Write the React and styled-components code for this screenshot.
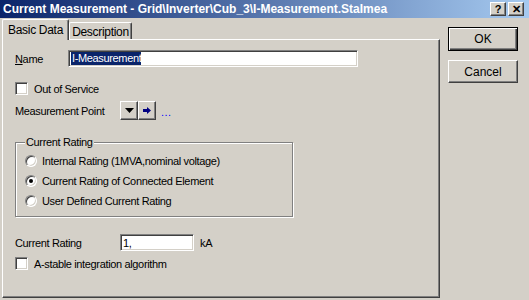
import React from 'react';
import styled, { createGlobalStyle, css } from 'styled-components';

const GlobalStyle = createGlobalStyle`
  html, body {
    margin: 0;
    padding: 0;
    background: #D4D0C8;
  }
  body {
    font-family: 'Liberation Sans', Arial, sans-serif;
    font-size: 11px;
    letter-spacing: -0.35px;
    color: #000;
  }
`;

const raised = css`
  border: 1px solid;
  border-color: #fff #404040 #404040 #fff;
  box-shadow: inset -1px -1px 0 #808080;
`;

const sunken = css`
  border: 1px solid;
  border-color: #808080 #fff #fff #808080;
  box-shadow: inset 1px 1px 0 #404040, inset -1px -1px 0 #D4D0C8;
`;

const Window = styled.div`
  width: 529px;
  height: 300px;
  display: flex;
  flex-direction: column;
  background: #D4D0C8;
  overflow: hidden;
`;

const TitleBar = styled.div`
  height: 18px;
  display: flex;
  align-items: center;
  justify-content: space-between;
  padding: 0 5px 0 3px;
  background: linear-gradient(to right, #0A246A, #A6CAF0);
`;

const Title = styled.div`
  color: #fff;
  font-weight: bold;
  font-size: 12px;
  letter-spacing: 0;
  white-space: nowrap;
`;

const CaptionButtons = styled.div`
  display: flex;
  gap: 2px;
`;

const CaptionButton = styled.div`
  width: 14px;
  height: 12px;
  background: #D4D0C8;
  ${raised};
  display: flex;
  align-items: center;
  justify-content: center;
  font-weight: bold;
  font-size: 11px;
  letter-spacing: 0;
  line-height: 1;
`;

const Body = styled.div`
  flex: 1;
  display: flex;
  padding: 1px 11px 2px 2px;
  gap: 8px;
`;

const Main = styled.div`
  width: 438px;
  display: flex;
  flex-direction: column;
`;

const TabStrip = styled.div`
  height: 20px;
  display: flex;
  align-items: flex-end;
  position: relative;
  z-index: 1;
`;

const Tab = styled.div`
  background: #D4D0C8;
  border: 1px solid;
  border-color: #fff #404040 transparent #fff;
  border-bottom: none;
  border-radius: 2px 2px 0 0;
  box-shadow: inset -1px 0 0 #808080;
  height: ${({ $active }) => ($active ? '21px' : '17px')};
  margin-bottom: ${({ $active }) => ($active ? '-1px' : '0')};
  width: ${({ $width }) => $width}px;
  box-sizing: border-box;
  display: flex;
  align-items: center;
  justify-content: center;
  font-size: 12px;
  letter-spacing: -0.3px;
  line-height: 1;
  padding-top: ${({ $active }) => ($active ? '0' : '1px')};
`;

const Page = styled.div`
  flex: 1;
  border: 1px solid;
  border-color: #fff #404040 #404040 #fff;
  box-shadow: inset -1px -1px 0 #808080;
  padding: 10px 12px 0 12px;
  display: flex;
  flex-direction: column;
`;

const Row = styled.div`
  display: flex;
  align-items: center;
  margin-top: ${({ $top }) => $top || 0}px;
`;

const Label = styled.div`
  width: ${({ $width }) => $width || 'auto'};
  flex-shrink: 0;
  white-space: nowrap;
`;

const Underline = styled.span`
  text-decoration: underline;
`;

const TextBox = styled.div`
  width: ${({ $width }) => $width}px;
  height: 17px;
  box-sizing: border-box;
  background: #fff;
  ${sunken};
  display: flex;
  align-items: center;
  padding-left: 2px;
  white-space: nowrap;
`;

const Selected = styled.span`
  background: #0A246A;
  color: #fff;
  padding-left: 1px;
  line-height: 13px;
`;

const CheckBox = styled.div`
  width: 13px;
  height: 13px;
  box-sizing: border-box;
  background: #fff;
  ${sunken};
  margin-right: 6px;
  flex-shrink: 0;
`;

const SmallButton = styled.div`
  width: 18px;
  height: 19px;
  box-sizing: border-box;
  background: #D4D0C8;
  ${raised};
  display: flex;
  align-items: center;
  justify-content: center;
`;

const Ellipsis = styled.span`
  color: #0000FF;
  margin-left: 5px;
  align-self: flex-end;
  margin-bottom: 2px;
  letter-spacing: 0.5px;
`;

const GroupBox = styled.fieldset`
  width: 278px;
  box-sizing: border-box;
  margin: 16px 0 0 0;
  padding: 2px 0 5px 9px;
  border: 1px solid #808080;
  box-shadow: inset 1px 1px 0 #fff, 1px 1px 0 #fff;
`;

const Legend = styled.legend`
  padding: 0 1px;
  margin-left: 0;
  background: #D4D0C8;
  line-height: 13px;
`;

const RadioRow = styled.div`
  height: 20px;
  display: flex;
  align-items: center;
`;

const Radio = styled.div`
  width: 12px;
  height: 12px;
  box-sizing: border-box;
  border-radius: 50%;
  background: #fff;
  border: 1px solid;
  border-color: #808080 #fff #fff #808080;
  box-shadow: inset 1px 1px 0 #404040, inset -1px -1px 0 #D4D0C8;
  margin-right: 5px;
  display: flex;
  align-items: center;
  justify-content: center;
  flex-shrink: 0;

  &::after {
    content: '';
    display: ${({ $checked }) => ($checked ? 'block' : 'none')};
    width: 4px;
    height: 4px;
    border-radius: 50%;
    background: #000;
  }
`;

const Unit = styled.span`
  margin-left: 6px;
`;

const Side = styled.div`
  display: flex;
  flex-direction: column;
  padding-top: 8px;
  gap: 9px;
`;

const Button = styled.div`
  width: 70px;
  height: 23px;
  box-sizing: border-box;
  display: flex;
  align-items: center;
  justify-content: center;
  background: #D4D0C8;
  font-size: 12px;
  letter-spacing: 0;
  ${({ $default }) =>
    $default
      ? css`
          border: 1px solid #000;
          box-shadow: inset 1px 1px 0 #fff, inset -1px -1px 0 #404040, inset -2px -2px 0 #808080;
          height: 24px;
        `
      : raised};
`;

const DownArrow = () => (
  <svg width="9" height="5" viewBox="0 0 9 5">
    <path d="M0 0h9L4.5 5z" fill="#000" />
  </svg>
);

const RightArrow = () => (
  <svg width="8" height="7" viewBox="0 0 8 7">
    <path d="M0 2h4V0l4 3.5L4 7V5H0z" fill="#000080" />
  </svg>
);

export default function App() {
  return (
    <>
      <GlobalStyle />
      <Window>
        <TitleBar>
          <Title>Current Measurement - Grid\Inverter\Cub_3\I-Measurement.StaImea</Title>
          <CaptionButtons>
            <CaptionButton>?</CaptionButton>
            <CaptionButton>✕</CaptionButton>
          </CaptionButtons>
        </TitleBar>
        <Body>
          <Main>
            <TabStrip>
              <Tab $active $width={67}>Basic Data</Tab>
              <Tab $width={63}>Description</Tab>
            </TabStrip>
            <Page>
              <Row>
                <Label $width="53px"><Underline>N</Underline>ame</Label>
                <TextBox $width={290}><Selected>I-Measurement</Selected></TextBox>
              </Row>
              <Row $top={15}>
                <CheckBox />
                <Label>Out of Service</Label>
              </Row>
              <Row $top={6}>
                <Label $width="105px">Measurement Point</Label>
                <SmallButton><DownArrow /></SmallButton>
                <SmallButton><RightArrow /></SmallButton>
                <Ellipsis>...</Ellipsis>
              </Row>
              <GroupBox>
                <Legend>Current Rating</Legend>
                <RadioRow><Radio />Internal Rating (1MVA,nominal voltage)</RadioRow>
                <RadioRow><Radio $checked />Current Rating of Connected Element</RadioRow>
                <RadioRow><Radio />User Defined Current Rating</RadioRow>
              </GroupBox>
              <Row $top={17}>
                <Label $width="105px">Current Rating</Label>
                <TextBox $width={74}>1,</TextBox>
                <Unit>kA</Unit>
              </Row>
              <Row $top={6}>
                <CheckBox />
                <Label>A-stable integration algorithm</Label>
              </Row>
            </Page>
          </Main>
          <Side>
            <Button $default>OK</Button>
            <Button>Cancel</Button>
          </Side>
        </Body>
      </Window>
    </>
  );
}
